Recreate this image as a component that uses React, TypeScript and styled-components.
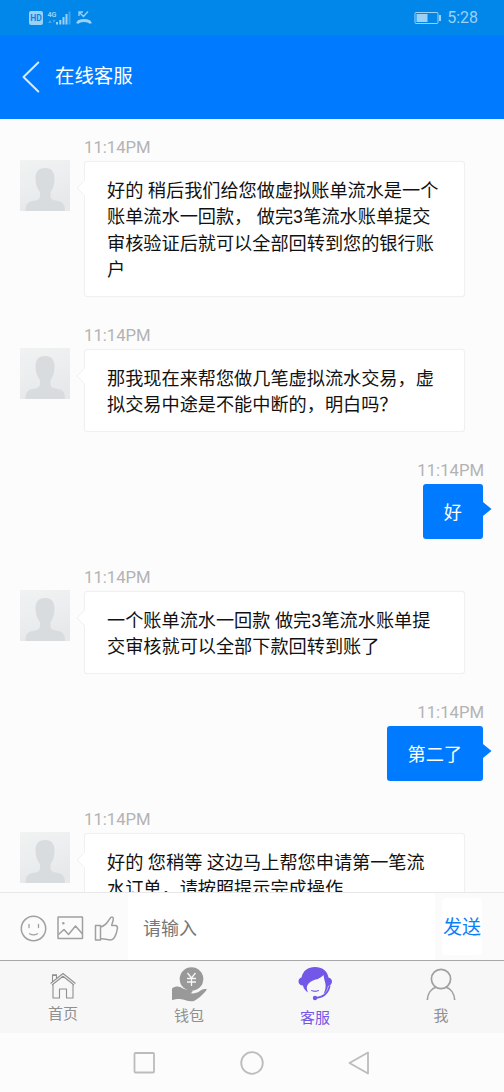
import React from "react";
import styled, { createGlobalStyle, css } from "styled-components";

const GlobalStyle = createGlobalStyle`
  * { box-sizing: border-box; }
  body {
    margin: 0;
    background: #fcfcfc;
    font-family: Roboto, "Noto Sans CJK SC", sans-serif;
  }
  svg { display: block; flex: none; }
`;

const Screen = styled.div`
  width: 504px;
  height: 1092px;
  display: flex;
  flex-direction: column;
  overflow: hidden;
  background: #fcfcfc;
`;

const StatusBar = styled.div`
  height: 35px;
  flex: none;
  display: flex;
  align-items: center;
  justify-content: space-between;
  padding: 0 26px 0 28px;
  background: #0187e9;
  color: #9bd0f7;
`;

const StatusGroup = styled.div`
  display: flex;
  align-items: center;
  gap: 5px;
`;

const Clock = styled.span`
  font-size: 16px;
  line-height: 20px;
  padding-top: 1px;
`;

const Header = styled.header`
  height: 84px;
  flex: none;
  display: flex;
  align-items: center;
  gap: 15px;
  padding: 0 21px 0 22px;
  background: #007bff;
  color: #fff;
`;

const Title = styled.h1`
  margin: 0;
  font-size: 19.4px;
  font-weight: 400;
  line-height: 28px;
`;

const Chat = styled.main`
  height: 773px;
  flex: none;
  overflow: hidden;
  padding: 15.6px 20px 0;
`;

const Message = styled.section<{ $mine?: boolean }>`
  display: flex;
  gap: 14px;
  margin-bottom: 25.8px;
  justify-content: ${(p) => (p.$mine ? "flex-end" : "flex-start")};
`;

const AvatarSlot = styled.div`
  padding-top: 25px;
`;

const Column = styled.div<{ $mine?: boolean }>`
  display: flex;
  flex-direction: column;
  align-items: ${(p) => (p.$mine ? "flex-end" : "flex-start")};
`;

const Time = styled.time`
  height: 26px;
  font-size: 16.7px;
  line-height: 26px;
  color: #b3b3b3;
`;

const Bubble = styled.div<{ $mine?: boolean }>`
  position: relative;
  font-size: 18.17px;
  line-height: 26.5px;
  white-space: nowrap;
  border-radius: 3px;
  ${(p) =>
    p.$mine
      ? css`
          margin-right: 1px;
          padding: 16.2px 21px 12.2px;
          background: #007bff;
          color: #fff;
        `
      : css`
          width: 381px;
          padding: 16px 22px 12.4px;
          background: #fff;
          border: 1px solid #f0f0f0;
          box-shadow: 0 0 1px #f2f2f2;
          color: #111;
        `}
`;

const Line = styled.div``;

const Tail = styled.svg<{ $mine?: boolean }>`
  position: absolute;
  top: ${(p) => (p.$mine ? "17px" : "16px")};
  ${(p) => (p.$mine ? "right: -9px;" : "left: -10px;")}
`;

const Composer = styled.div`
  height: 68px;
  flex: none;
  display: flex;
  align-items: center;
  padding-left: 20px;
  border-top: 1px solid #e8e8e8;
  background: #fbfbfb;
`;

const Tools = styled.div`
  display: flex;
  align-items: center;
  gap: 9px;
  width: 108px;
  padding-top: 3px;
  color: #a0a0a0;
`;

const Field = styled.div`
  width: 307px;
  height: 100%;
  padding-left: 15px;
  background: #fff;
  color: #777;
  font-size: 18px;
  line-height: 71px;
`;

const Send = styled.button`
  margin: 0 0 0 7px;
  padding: 2px 0 0;
  width: 40px;
  height: 57px;
  border: 0;
  border-radius: 4px;
  background: #fff;
  color: #0a80f8;
  font: 19px/55px Roboto, "Noto Sans CJK SC", sans-serif;
  white-space: nowrap;
`;

const TabBar = styled.nav`
  height: 73px;
  flex: none;
  display: grid;
  grid-template-columns: repeat(4, 1fr);
  border-top: 1px solid #a8a8a8;
  background: #f7f7f7;
`;

const Tab = styled.a<{ $active?: boolean; $top: number; $gap: number }>`
  display: flex;
  flex-direction: column;
  align-items: center;
  gap: ${(p) => p.$gap}px;
  padding-top: ${(p) => p.$top}px;
  font-size: 15px;
  line-height: 20px;
  color: ${(p) => (p.$active ? "#7257e8" : "#909090")};
`;

const SystemNav = styled.div`
  height: 59px;
  flex: none;
  display: flex;
  justify-content: center;
  align-items: center;
  gap: 84px;
  color: #bcbcbc;
`;

const Avatar = () => (
  <svg width="50" height="51" viewBox="0 0 50 51">
    <defs>
      <linearGradient id="avatarBg" x1="0" y1="0" x2="0.3" y2="1">
        <stop offset="0" stopColor="#f1f2f2" />
        <stop offset="0.5" stopColor="#eceeef" />
        <stop offset="1" stopColor="#e6e8ea" />
      </linearGradient>
    </defs>
    <rect width="50" height="51" fill="url(#avatarBg)" />
    <path
      d="M25 8c6.500 0 9.500 4 9.500 10 0 6-1.200 10.500-4 14v5c1.500 3.500 3.500 3.300 7.500 4 5 1 7 3.500 7 10H5.500c0-6.500 2-9 7-10 4-.7 6-.5 7.500-4v-5c-2.800-3.500-4.500-8-4.500-14 0-6 3-10 9.500-10z"
      fill="#d8dcdf"
    />
  </svg>
);

const BubbleTail = ({ mine }: { mine?: boolean }) =>
  mine ? (
    <Tail $mine width="10" height="16" viewBox="0 0 10 16">
      <path d="M0 1h1l8.500 7L1 15H0z" fill="#007bff" />
    </Tail>
  ) : (
    <Tail width="11" height="20" viewBox="0 0 11 20">
      <path d="M11 1L2 10l9 9z" fill="#fff" />
      <path d="M9.500 2.500L2 10l7.500 7.500" fill="none" stroke="#f0f0f0" />
    </Tail>
  );

const SignalIcons = () => (
  <svg width="64" height="20" viewBox="0 0 64 20">
    <rect x="1" y="3" width="14" height="14" rx="2" fill="#9bd0f7" />
    <text x="8" y="13.300" textAnchor="middle" fontFamily="Roboto" fontSize="8.500" fontWeight="700" fill="#0187e9">HD</text>
    <text x="19.500" y="9" fontFamily="Roboto" fontSize="8" fontWeight="700" fill="#9bd0f7" textLength="9" lengthAdjust="spacingAndGlyphs">4G</text>
    <g fill="#9bd0f7">
      <path d="M20 15l2-3 2 3zM24.500 12h3l-1.500 3z" opacity=".4" />
      <rect x="28" y="14" width="2" height="2.500" />
      <rect x="31.300" y="12" width="2" height="4.500" />
      <rect x="34.500" y="9" width="2" height="7.500" />
      <rect x="37.500" y="6" width="2" height="10.500" />
      <rect x="40.500" y="3.500" width="2" height="13" opacity=".4" />
    </g>
    <g fill="none" stroke="#9bd0f7">
      <path d="M51 8V4h4M51 4l4.500 4.500L60 3.500" strokeWidth="1.300" />
      <path d="M49.500 15.500c1-4 12-4 13 0" strokeWidth="2.800" />
    </g>
  </svg>
);

const BatteryIcon = () => (
  <svg width="28" height="14" viewBox="0 0 28 14">
    <rect x="1" y="1.500" width="23" height="11" rx="1" fill="none" stroke="#9bd0f7" />
    <rect x="2.500" y="3" width="11" height="8" fill="#9bd0f7" />
    <rect x="25" y="4" width="2" height="6" fill="#9bd0f7" />
  </svg>
);

const BackIcon = () => (
  <svg width="18" height="32" viewBox="0 0 18 32" fill="none" stroke="#d5ebff" strokeWidth="2" strokeLinecap="round" strokeLinejoin="round">
    <path d="M16.300 1.500L1.500 16l14.800 14.500" />
  </svg>
);

const SmileIcon = () => (
  <svg width="27" height="27" viewBox="0 0 27 27" fill="none" stroke="currentColor" strokeWidth="1.500" strokeLinecap="round">
    <circle cx="13.500" cy="13.500" r="12.200" />
    <path d="M9 9.500v3M18.500 9.500v3M9.500 18.700q4 2.200 8 0" strokeWidth="1.300" />
  </svg>
);

const PictureIcon = () => (
  <svg width="28" height="26" viewBox="0 0 28 26" fill="none" stroke="currentColor" strokeWidth="1.500" strokeLinejoin="round">
    <rect x="2" y="2" width="24.500" height="21.500" rx=".5" />
    <path d="M2.500 19.500l5.500-5 4.500 5 7-8.500 7 8" />
    <circle cx="7.300" cy="8.300" r="1.200" fill="currentColor" stroke="none" />
  </svg>
);

const ThumbIcon = () => (
  <svg width="26" height="27" viewBox="0 0 26 27" fill="none" stroke="currentColor" strokeWidth="1.500" strokeLinejoin="round">
    <path d="M2.500 10.500h5V25h-5zM7.500 12c5-1 7-4.500 9.500-8.500 1.500-2.500 4-1.500 3.200 1.500-.5 2.500-1.500 4-1.500 5.500h4c1.500.5 2 1.500 1.700 3-.5 3.500-1 6-3 9-1 1.500-2 2.500-4 2.500l-9.900-1.500" />
  </svg>
);

const HomeIcon = () => (
  <svg width="28" height="28" viewBox="0 0 28 28" fill="none" stroke="currentColor" strokeWidth="1.100" strokeLinejoin="round">
    <path d="M1.500 11.500L14 1.500l12.500 10M3 13L14 4.200 25 13M4 12.500V26h6.500v-9h7v9H24V12.500M3.500 9.800V3.500h4v3.200M3 2.800h5" />
  </svg>
);

const WalletIcon = () => (
  <svg width="37" height="36" viewBox="0 0 37 36">
    <circle cx="20.500" cy="13" r="11.800" fill="#999" />
    <path d="M16.500 7l4 5 4-5M20.500 12v8M16 12.500h9M16 16h9" fill="none" stroke="#f7f7f7" strokeWidth="1.300" />
    <path d="M1 22.500c4-3 8-2 11 0 3 1.500 5 1.500 7.500 1.500 3 .3 2.500 2.500-.5 3.300 4 .5 7-.3 9.500-2 3-2.300 5-2.800 7.500-2-3 4.500-8.500 9.500-13 11.700-6 1-9-1.500-14-2-3-.2-5 .3-8 1z" fill="#999" />
  </svg>
);

const AgentIcon = () => (
  <svg width="35" height="35" viewBox="0 0 35 35">
    <path
      d="M3.500 11.500C5 4.500 10 1 17 1s12.500 4 13.500 10.500c2.700.5 3.500 2.500 3.500 4 0 2.300-1.500 4-4 4.500-.5 3.500-2 6-4.500 8 2-4 2.600-8 1.800-11-.8-2.500-1.300-5-1.800-8-3.500 4-7 4-10.500 5.500C11.500 16 9.500 18 8.800 21c0 2 .5 4 1.200 5.500-2.500-1.500-4.500-4-5-7C2 19.500.5 17.500.5 15.500c0-2 1-3.500 3-4z"
      fill="#7257e8"
    />
    <path d="M31.800 19.500c-1.500 7.500-6 12-14.800 12.500" fill="none" stroke="#7257e8" strokeWidth="1.600" />
    <circle cx="17" cy="32" r="2.200" fill="#7257e8" />
    <path d="M13 24.500q4 2 8 0-4 1.200-8 0z" fill="#7257e8" stroke="#7257e8" strokeWidth=".6" />
  </svg>
);

const PersonIcon = () => (
  <svg width="30" height="33" viewBox="0 0 30 33" fill="none" stroke="#a0a0a0" strokeWidth="1.700">
    <circle cx="15" cy="11" r="9.600" />
    <path d="M1.300 32c.3-6.500 4-11.500 9.200-13M28.700 32c-.3-6.500-4-11.500-9.200-13" />
  </svg>
);

type Entry = { mine?: boolean; lines: string[] };

const entries: Entry[] = [
  {
    lines: [
      "好的 稍后我们给您做虚拟账单流水是一个",
      "账单流水一回款， 做完3笔流水账单提交",
      "审核验证后就可以全部回转到您的银行账",
      "户",
    ],
  },
  { lines: ["那我现在来帮您做几笔虚拟流水交易，虚", "拟交易中途是不能中断的，明白吗？"] },
  { mine: true, lines: ["好"] },
  { lines: ["一个账单流水一回款 做完3笔流水账单提", "交审核就可以全部下款回转到账了"] },
  { mine: true, lines: ["第二了"] },
  { lines: ["好的 您稍等 这边马上帮您申请第一笔流", "水订单，请按照提示完成操作"] },
];

export default function App() {
  return (
    <>
      <GlobalStyle />
      <Screen>
        <StatusBar>
          <SignalIcons />
          <StatusGroup>
            <BatteryIcon />
            <Clock>5:28</Clock>
          </StatusGroup>
        </StatusBar>
        <Header>
          <BackIcon />
          <Title>在线客服</Title>
        </Header>
        <Chat>
          {entries.map((entry, i) => (
            <Message key={i} $mine={entry.mine}>
              {!entry.mine && (
                <AvatarSlot>
                  <Avatar />
                </AvatarSlot>
              )}
              <Column $mine={entry.mine}>
                <Time>11:14PM</Time>
                <Bubble $mine={entry.mine}>
                  <BubbleTail mine={entry.mine} />
                  {entry.lines.map((line) => (
                    <Line key={line}>{line}</Line>
                  ))}
                </Bubble>
              </Column>
            </Message>
          ))}
        </Chat>
        <Composer>
          <Tools>
            <SmileIcon />
            <PictureIcon />
            <ThumbIcon />
          </Tools>
          <Field>请输入</Field>
          <Send>发送</Send>
        </Composer>
        <TabBar>
          <Tab $top={11} $gap={4}>
            <HomeIcon />
            首页
          </Tab>
          <Tab $top={5} $gap={4}>
            <WalletIcon />
            钱包
          </Tab>
          <Tab $top={5} $gap={7} $active>
            <AgentIcon />
            客服
          </Tab>
          <Tab $top={7} $gap={5}>
            <PersonIcon />
            我
          </Tab>
        </TabBar>
        <SystemNav>
          <svg width="24" height="24" viewBox="0 0 24 24" fill="none" stroke="currentColor" strokeWidth="1.800">
            <rect x="2.500" y="2" width="19.500" height="19.500" rx="1" />
          </svg>
          <svg width="24" height="24" viewBox="0 0 24 24" fill="none" stroke="currentColor" strokeWidth="1.800">
            <circle cx="12" cy="12" r="10.800" />
          </svg>
          <svg width="24" height="24" viewBox="0 0 24 24" fill="none" stroke="currentColor" strokeWidth="1.800" strokeLinejoin="round">
            <path d="M20 1.500v21L1.500 12z" />
          </svg>
        </SystemNav>
      </Screen>
    </>
  );
}
